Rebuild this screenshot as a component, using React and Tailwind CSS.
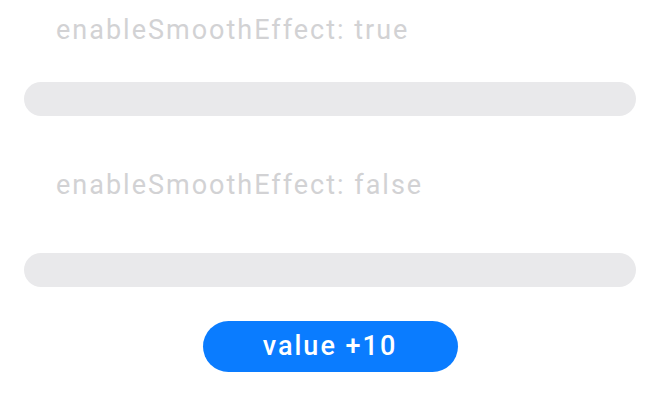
export default function App() {
  return (
    <div
      className="flex h-[400px] w-[660px] flex-col bg-white"
      style={{ fontFamily: 'Roboto, "Noto Sans", sans-serif' }}
    >
      <div className="flex h-[60px] items-center pl-[56px] text-[27px] tracking-[2px] text-[#d2d2d4]">
        enableSmoothEffect: true
      </div>
      <div className="mx-[24px] mt-[22px] h-[34px] rounded-full bg-[#e9e9eb]" />
      <div className="mt-[39px] flex h-[60px] items-center pl-[56px] text-[27px] tracking-[2px] text-[#d2d2d4]">
        enableSmoothEffect: false
      </div>
      <div className="mx-[24px] mt-[38px] h-[34px] rounded-full bg-[#e9e9eb]" />
      <div className="mt-[34px] flex justify-center">
        <button
          type="button"
          className="flex h-[51px] w-[255px] items-center justify-center rounded-full bg-[#0a7cff] text-[27px] font-medium tracking-[2px] text-white"
        >
          value +10
        </button>
      </div>
    </div>
  )
}
